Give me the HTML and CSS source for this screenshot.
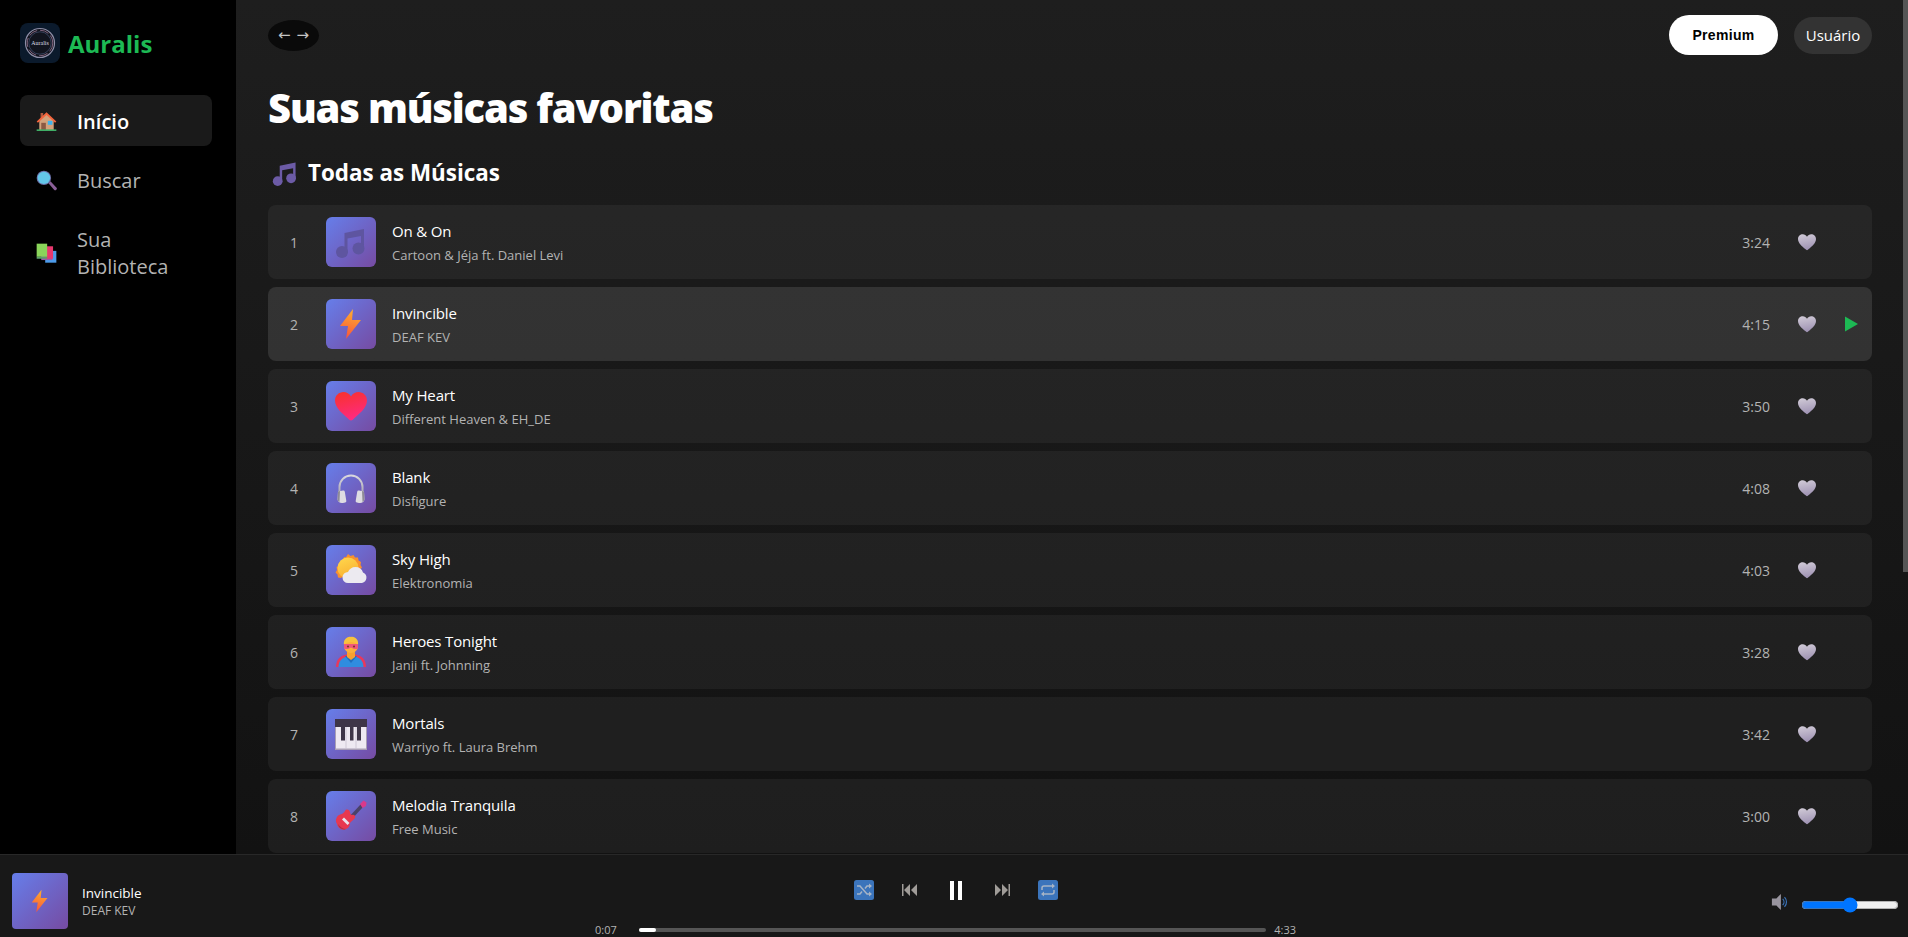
FILE: index.html
```html
<!DOCTYPE html>
<html lang="pt-BR">

<head>
  <meta charset="utf-8">
  <title>Auralis</title>
  <link rel="stylesheet" href="styles.css">
</head>

<body>
  <!-- emoji style icons, reused with <use> -->
  <svg class="icon-defs" width="0" height="0" aria-hidden="true">
    <defs>
      <linearGradient id="g-bolt" x1="0.6" y1="0" x2="0.4" y2="1">
        <stop offset="0" stop-color="#ffb02e" />
        <stop offset="1" stop-color="#f8543c" />
      </linearGradient>
      <linearGradient id="g-heart" x1="0.3" y1="0" x2="0.6" y2="1">
        <stop offset="0" stop-color="#f8312f" />
        <stop offset="1" stop-color="#ff2a85" />
      </linearGradient>
      <linearGradient id="g-grey-heart" x1="0" y1="0" x2="0.2" y2="1">
        <stop offset="0" stop-color="#d2ccd8" />
        <stop offset="1" stop-color="#a094b4" />
      </linearGradient>
      <linearGradient id="g-sun" x1="0" y1="0" x2="0.4" y2="1">
        <stop offset="0" stop-color="#ffd84d" />
        <stop offset="1" stop-color="#f9b233" />
      </linearGradient>
      <linearGradient id="g-phones" x1="0" y1="0" x2="0" y2="1">
        <stop offset="0" stop-color="#dcdae0" />
        <stop offset="1" stop-color="#a9a6b2" />
      </linearGradient>
      <linearGradient id="g-notes" x1="0.7" y1="0" x2="0.3" y2="1">
        <stop offset="0" stop-color="#6f5fae" />
        <stop offset="1" stop-color="#6a5ba6" />
      </linearGradient>

      <symbol id="i-house" viewBox="0 0 32 32">
        <path d="M7 3h4v5l-4 4z" fill="#b4593f" />
        <path d="M5 14 16 4l11 10v15H5z" fill="#d3a27c" />
        <path d="M16 2 31 16l-2 2L16 6 3 18l-2-2z" fill="#f4643c" />
        <path d="M8 18h7v11H8z" fill="#8c5a44" />
        <path d="M18 15h7v6h-7z" fill="#3fb3ec" />
        <path d="M1 28h30v2.500H1z" fill="#3fae66" />
      </symbol>
      <symbol id="i-search" viewBox="0 0 32 32">
        <path d="M19 20l3-3 9 9.500a2 2 0 0 1-3.500 3.500z" fill="#8a5f98" />
        <circle cx="12" cy="12" r="11" fill="#6c6fa8" />
        <circle cx="12" cy="12" r="9.500" fill="#63c7ea" />
      </symbol>
      <symbol id="i-books" viewBox="0 0 32 32">
        <path d="M14 12h17v18H14z" fill="#4c9bea" />
        <path d="M8 6h17v20H8z" fill="#9a5aa8" />
        <path d="M14 5h12v19H14z" fill="#e8386e" />
        <path d="M1 1h16v20H1z" fill="#8ad55a" />
        <path d="M1 21h16v3H1z" fill="#5c9f6a" />
      </symbol>
      <symbol id="i-notes" viewBox="0 0 32 32">
        <path d="M9.500 7 29 3v20h-3V10L12.500 12.500V27h-3z" fill="currentColor" />
        <circle cx="7" cy="26" r="6" fill="currentColor" />
        <circle cx="23.500" cy="22.500" r="6" fill="currentColor" />
      </symbol>
      <symbol id="i-bolt" viewBox="0 0 32 32">
        <path d="M18 1 5 18h8l-2 13 15-19h-9z" fill="url(#g-bolt)" />
      </symbol>
      <symbol id="i-heart" viewBox="0 0 32 32">
        <path d="M16 30.500c-1 0-2-1-3-2C8 24 0 18 0 10.500 0 5.500 4 2 8.500 2c3 0 6 1.500 7.500 4.500C17.500 3.500 20.500 2 23.500 2 28 2 32 5.500 32 10.500 32 18 24 24 19 28.500c-1 1-2 2-3 2z" fill="url(#g-heart)" />
      </symbol>
      <symbol id="i-grey-heart" viewBox="0 0 32 32">
        <path d="M16 30.500c-1 0-2-1-3-2C8 24 0 18 0 10.500 0 5.500 4 2 8.500 2c3 0 6 1.500 7.500 4.500C17.500 3.500 20.500 2 23.500 2 28 2 32 5.500 32 10.500 32 18 24 24 19 28.500c-1 1-2 2-3 2z" fill="url(#g-grey-heart)" />
      </symbol>
      <symbol id="i-phones" viewBox="0 0 32 32">
        <path d="M3.500 22V15a12.500 12.500 0 0 1 25 0v7h-2v-7a10.500 10.500 0 0 0-21 0v7z" fill="url(#g-phones)" />
        <path d="M3 19.500 8 18.500a1.500 1.500 0 0 1 1.800 1.200l1.500 9a1.500 1.500 0 0 1-1.200 1.800L8 31c-3 .5-5-1-5.500-3.500z" fill="#dedce2" />
        <path d="M29 19.500 24 18.500a1.500 1.500 0 0 0-1.800 1.200l-1.500 9a1.500 1.500 0 0 0 1.200 1.800L24 31c3 .5 5-1 5.500-3.500z" fill="#dedce2" />
        <path d="M2.500 27.500 3 19.500 5 19l-.5 11c-1-.5-1.700-1.500-2-2.500zM29.500 27.500 29 19.500 27 19l.5 11c1-.5 1.700-1.500 2-2.500z" fill="#8e8b96" />
      </symbol>
      <symbol id="i-sun" viewBox="0 0 32 32">
        <path d="M13 0l2.500 2 3-1 1.500 2.500h3l.5 3 2.500 1.500-.5 3 1.500 2.500-2 2-.5 3-3 .5-1.500 2.500-3-.5-2.500 2-2.500-2-3 .5L6 24l-3-.5-.5-3-2-2L2 16l-.5-3L4 11.500l.5-3h3L9 3l2 .2z" fill="#f8912e" />
        <circle cx="13" cy="14" r="10.500" fill="url(#g-sun)" />
        <path d="M13 29a5.500 5.500 0 0 1 0-11c1-3 4-5 7.500-5a8 8 0 0 1 7.500 5.500 5.500 5.500 0 0 1-1 10.500z" fill="#eceaf0" />
      </symbol>
      <symbol id="i-hero" viewBox="0 0 32 32">
        <path d="M1 31c0-8 5-13 15-13s15 5 15 13z" fill="#e8385c" />
        <path d="M3.500 31c0-7 5-11 12.500-11s12.500 4 12.500 11z" fill="#2f8de0" />
        <path d="M10 20h12l-6 7z" fill="#1f6fc0" />
        <path d="M12 15h8v6l-4 3-4-3z" fill="#f9a12e" />
        <circle cx="16" cy="10" r="7" fill="#fbb03b" />
        <path d="M9 9c-1-5 3-9 7-8 4-1 8 3 7 8-2-2-4-3-7-3s-5 1-7 3z" fill="#f7c23e" />
        <path d="M9 8h14v3.500a1.500 1.500 0 0 1-1.500 1.500H19l-3-1.500-3 1.500h-2.500A1.500 1.500 0 0 1 9 11.500z" fill="#f0567a" />
        <circle cx="13" cy="10.500" r="1.100" fill="#7a3a2a" />
        <circle cx="19" cy="10.500" r="1.100" fill="#7a3a2a" />
      </symbol>
      <symbol id="i-piano" viewBox="0 0 32 32">
        <path d="M0 1h32v31H0z" fill="#a99fb5" />
        <path d="M1 9h30v21.500H1z" fill="#eee9f2" />
        <path d="M0 1h32v8H0z" fill="#3e3548" />
        <path d="M11 9v21.500M21 9v21.500" stroke="#c8c0d0" stroke-width="0.800" />
        <path d="M6 9h4v13.500H6zM15 9h3.500v13.500H15zM22 9h4v13.500h-4z" fill="#3e3548" />
      </symbol>
      <symbol id="i-guitar" viewBox="0 0 32 32">
        <path d="M13 18 26 4l2.500 2.500-13 14z" fill="#4a4268" />
        <path d="M25 4l3.500-3.500 3 2-.5 3.500-3.500 2z" fill="#d9398b" />
        <path d="M15 12c-1-3-4-3-5-1-1 2-3 3-6 4-3 2-4 6-2 9 1 4 5 7 9 5 3-1 4-4 4-6 1-2 4-3 5-5 1-2-1-4-3-3-1 0-2-1-2-3z" fill="#e8384f" />
        <path d="M9 17.500l5.500 5.500-2 2-5.500-5.500z" fill="#e9e4ec" />
        <path d="M3 24c2 3 5 5 8 5-2 1-5 0-7-2z" fill="#a8324a" />
      </symbol>
    </defs>
  </svg>

  <div class="app">
    <aside class="sidebar">
      <div class="brand">
        <svg class="brand-logo" viewBox="0 0 40 40" aria-hidden="true">
          <rect width="40" height="40" rx="8" fill="#0b1a2c" />
          <circle cx="20" cy="20" r="14.500" fill="#11141e" stroke="#8d8da6" stroke-width="1.200" />
          <circle cx="20" cy="20" r="12.800" fill="none" stroke="#a07a98" stroke-width="0.800" stroke-dasharray="9 3" />
          <circle cx="20" cy="20" r="11.200" fill="none" stroke="#4a5a80" stroke-width="0.600" />
          <text x="20" y="21.500" text-anchor="middle" class="brand-logo-text">Auralis</text>
        </svg>
        <span class="brand-name">Auralis</span>
      </div>

      <nav class="nav">
        <a class="nav-item is-active" href="#"><svg class="nav-icon"><use href="#i-house" /></svg><span>Início</span></a>
        <a class="nav-item" href="#"><svg class="nav-icon"><use href="#i-search" /></svg><span>Buscar</span></a>
        <a class="nav-item" href="#"><svg class="nav-icon"><use href="#i-books" /></svg><span class="nav-label-wrap">Sua Biblioteca</span></a>
      </nav>
    </aside>

    <main class="main">
      <header class="topbar">
        <div class="history"><span>←</span><span>→</span></div>
        <div class="topbar-actions">
          <button class="btn-premium">Premium</button>
          <button class="btn-user">Usuário</button>
        </div>
      </header>

      <h1 class="page-title">Suas músicas favoritas</h1>

      <h2 class="section-title"><svg class="section-icon"><use href="#i-notes" /></svg>Todas as Músicas</h2>

      <div class="tracks">
        <div class="track">
          <span class="track-num">1</span>
          <div class="cover"><svg class="cover-icon cover-notes"><use href="#i-notes" /></svg></div>
          <div class="track-info"><div class="track-title">On &amp; On</div><div class="track-artist">Cartoon &amp; Jéja ft. Daniel Levi</div></div>
          <span class="track-time">3:24</span>
          <svg class="track-heart"><use href="#i-grey-heart" /></svg>
          <svg class="track-play" viewBox="0 0 14 16"><path d="M0 0l14 8-14 8z" /></svg>
        </div>
        <div class="track is-current">
          <span class="track-num">2</span>
          <div class="cover"><svg class="cover-icon"><use href="#i-bolt" /></svg></div>
          <div class="track-info"><div class="track-title">Invincible</div><div class="track-artist">DEAF KEV</div></div>
          <span class="track-time">4:15</span>
          <svg class="track-heart"><use href="#i-grey-heart" /></svg>
          <svg class="track-play" viewBox="0 0 14 16"><path d="M0 0l14 8-14 8z" /></svg>
        </div>
        <div class="track">
          <span class="track-num">3</span>
          <div class="cover"><svg class="cover-icon"><use href="#i-heart" /></svg></div>
          <div class="track-info"><div class="track-title">My Heart</div><div class="track-artist">Different Heaven &amp; EH_DE</div></div>
          <span class="track-time">3:50</span>
          <svg class="track-heart"><use href="#i-grey-heart" /></svg>
          <svg class="track-play" viewBox="0 0 14 16"><path d="M0 0l14 8-14 8z" /></svg>
        </div>
        <div class="track">
          <span class="track-num">4</span>
          <div class="cover"><svg class="cover-icon"><use href="#i-phones" /></svg></div>
          <div class="track-info"><div class="track-title">Blank</div><div class="track-artist">Disfigure</div></div>
          <span class="track-time">4:08</span>
          <svg class="track-heart"><use href="#i-grey-heart" /></svg>
          <svg class="track-play" viewBox="0 0 14 16"><path d="M0 0l14 8-14 8z" /></svg>
        </div>
        <div class="track">
          <span class="track-num">5</span>
          <div class="cover"><svg class="cover-icon"><use href="#i-sun" /></svg></div>
          <div class="track-info"><div class="track-title">Sky High</div><div class="track-artist">Elektronomia</div></div>
          <span class="track-time">4:03</span>
          <svg class="track-heart"><use href="#i-grey-heart" /></svg>
          <svg class="track-play" viewBox="0 0 14 16"><path d="M0 0l14 8-14 8z" /></svg>
        </div>
        <div class="track">
          <span class="track-num">6</span>
          <div class="cover"><svg class="cover-icon"><use href="#i-hero" /></svg></div>
          <div class="track-info"><div class="track-title">Heroes Tonight</div><div class="track-artist">Janji ft. Johnning</div></div>
          <span class="track-time">3:28</span>
          <svg class="track-heart"><use href="#i-grey-heart" /></svg>
          <svg class="track-play" viewBox="0 0 14 16"><path d="M0 0l14 8-14 8z" /></svg>
        </div>
        <div class="track">
          <span class="track-num">7</span>
          <div class="cover"><svg class="cover-icon"><use href="#i-piano" /></svg></div>
          <div class="track-info"><div class="track-title">Mortals</div><div class="track-artist">Warriyo ft. Laura Brehm</div></div>
          <span class="track-time">3:42</span>
          <svg class="track-heart"><use href="#i-grey-heart" /></svg>
          <svg class="track-play" viewBox="0 0 14 16"><path d="M0 0l14 8-14 8z" /></svg>
        </div>
        <div class="track">
          <span class="track-num">8</span>
          <div class="cover"><svg class="cover-icon"><use href="#i-guitar" /></svg></div>
          <div class="track-info"><div class="track-title">Melodia Tranquila</div><div class="track-artist">Free Music</div></div>
          <span class="track-time">3:00</span>
          <svg class="track-heart"><use href="#i-grey-heart" /></svg>
          <svg class="track-play" viewBox="0 0 14 16"><path d="M0 0l14 8-14 8z" /></svg>
        </div>
      </div>

      <div class="scroll-thumb"></div>
    </main>

    <footer class="player">
      <div class="now-playing">
        <div class="cover cover-large"><svg class="cover-icon"><use href="#i-bolt" /></svg></div>
        <div>
          <div class="now-title">Invincible</div>
          <div class="now-artist">DEAF KEV</div>
        </div>
      </div>

      <div class="transport">
        <div class="controls">
          <svg class="ctl-box" viewBox="0 0 20 20">
            <rect width="20" height="20" rx="2.500" fill="#3b74bb" />
            <path d="M3 6h3l7 8h2M3 14h3l2-2.500M11 8.500 13 6h2" fill="none" stroke="#a7b4c6" stroke-width="1.500" />
            <path d="M15 3.500 18 6l-3 2.500zM15 11.500l3 2.500-3 2.500z" fill="#a7b4c6" />
          </svg>
          <svg class="ctl-skip" viewBox="0 0 15 14"><path d="M0 1h1.500v12H0zM8 1v12L2 7zM15 1v12L9 7z" /></svg>
          <div class="ctl-pause"><span></span><span></span></div>
          <svg class="ctl-skip" viewBox="0 0 15 14"><path d="M0 1v12l6-6zM7 1v12l6-6zM13.500 1H15v12h-1.500z" /></svg>
          <svg class="ctl-box" viewBox="0 0 20 20">
            <rect width="20" height="20" rx="2.500" fill="#3b74bb" />
            <path d="M4 10V8a2 2 0 0 1 2-2h9M16 10v2a2 2 0 0 1-2 2H5" fill="none" stroke="#a7b4c6" stroke-width="1.500" />
            <path d="M14 3.500 17 6l-3 2.500zM6 11.500 3 14l3 2.500z" fill="#a7b4c6" />
          </svg>
        </div>
        <div class="progress">
          <span class="progress-time">0:07</span>
          <div class="progress-bar"><div class="progress-fill" style="width: 2.800%"></div></div>
          <span class="progress-time">4:33</span>
        </div>
      </div>

      <div class="volume">
        <svg class="volume-icon" viewBox="0 0 18 20">
          <path d="M0 6h5l5-5v18l-5-5H0z" fill="#98949e" />
          <path d="M12 6.500a5 5 0 0 1 0 7M14 4.500a8 8 0 0 1 0 11" fill="none" stroke="#3b74bb" stroke-width="1.300" />
        </svg>
        <input class="volume-range" type="range" min="0" max="100" value="50">
      </div>
    </footer>
  </div>
</body>

</html>
```

FILE: styles.css
```css
* {
  box-sizing: border-box;
}

html,
body {
  height: 100%;
  margin: 0;
  overflow: hidden;
}

body {
  background: #000;
  color: white;
  font-family: "Open Sans", "Noto Sans", sans-serif;
}

.icon-defs {
  position: absolute;
}

.app {
  display: grid;
  grid-template-columns: 236px 1fr;
  grid-template-rows: 854px 83px;
  height: 100vh;
}

/* sidebar */
.sidebar {
  padding: 23px 24px 23px 20px;
  background: #000;
}

.brand {
  display: flex;
  align-items: center;
  gap: 8px;
  margin-bottom: 32px;
}

.brand-logo {
  width: 40px;
  height: 40px;
}

.brand-logo-text {
  font-family: "Liberation Serif", serif;
  font-size: 6px;
  fill: #d8d8e0;
}

.brand-name {
  color: #1db954;
  font-size: 24px;
  font-weight: 700;
}

.nav {
  display: flex;
  flex-direction: column;
  gap: 8px;
}

.nav-item {
  display: flex;
  align-items: center;
  gap: 20px;
  padding: 13px 16px 11px;
  border-radius: 8px;
  color: #b3b3b3;
  font-size: 20px;
  font-weight: 500;
  line-height: 27px;
  text-decoration: none;
}

.nav-item.is-active {
  background: #1a1a1a;
  color: white;
  font-weight: 600;
}

.nav-icon {
  flex: none;
  width: 21px;
  height: 21px;
}

.nav-label-wrap {
  width: 100px;
}

/* main column */
.main {
  position: relative;
  padding: 0 36px 0 32px;
  overflow: hidden;
  background: linear-gradient(180deg, #1e1e1e, #121212);
}

.scroll-thumb {
  position: absolute;
  top: 0;
  right: 0;
  width: 5px;
  height: 572px;
  background: #555;
}

.topbar {
  display: flex;
  align-items: center;
  justify-content: space-between;
  height: 70px;
}

.history {
  display: flex;
  align-items: center;
  justify-content: center;
  gap: 6px;
  width: 51px;
  height: 31px;
  border-radius: 50%;
  background: #0a0a0a;
  color: #c4c4c4;
  font-family: "DejaVu Sans", sans-serif;
  font-size: 15px;
}

.topbar-actions {
  display: flex;
  align-items: center;
  gap: 16px;
}

.btn-premium {
  width: 109px;
  height: 40px;
  border: 0;
  border-radius: 20px;
  background: white;
  color: black;
  font-family: "Liberation Sans", sans-serif;
  font-size: 14px;
  font-weight: 700;
  letter-spacing: 0.3px;
}

.btn-user {
  width: 78px;
  height: 37px;
  border: 0;
  border-radius: 19px;
  background: #333;
  color: white;
  font-family: inherit;
  font-size: 15px;
}

.page-title {
  margin: 10px 0 0;
  font-size: 40px;
  font-weight: 800;
  line-height: 56px;
  letter-spacing: -1.200px;
}

.section-title {
  display: flex;
  align-items: center;
  gap: 10px;
  margin: 22px 0 17px;
  padding-left: 4px;
  font-size: 22.400px;
  font-weight: 700;
  line-height: 30px;
}

.section-icon {
  width: 26px;
  height: 26px;
  color: #6c5ba6;
}

.tracks {
  display: flex;
  flex-direction: column;
  gap: 8px;
}

.track {
  display: flex;
  align-items: center;
  height: 74px;
  padding: 0 14px 0 16px;
  border-radius: 8px;
  background: rgba(255, 255, 255, 0.05);
}

.track.is-current {
  background: rgba(255, 255, 255, 0.11);
}

.track-num {
  width: 20px;
  margin-right: 22px;
  color: #b3b3b3;
  font-size: 14px;
  text-align: center;
}

.cover {
  display: flex;
  flex: none;
  align-items: center;
  justify-content: center;
  width: 50px;
  height: 50px;
  border-radius: 6px;
  background: linear-gradient(135deg, #667eea, #764ba2);
}

.cover-icon {
  width: 32px;
  height: 32px;
}

.cover-notes {
  color: #5e55a0;
}

.track-info {
  flex: 1;
  margin-left: 16px;
}

.track-title {
  font-size: 15px;
  line-height: 22px;
  letter-spacing: -0.150px;
}

.track-artist {
  margin-top: 3px;
  color: #b3b3b3;
  font-size: 13px;
  line-height: 20px;
}

.track-time {
  color: #b3b3b3;
  font-size: 14px;
}

.track-heart {
  width: 18px;
  height: 18px;
  margin: 0 29px 0 28px;
}

.track-play {
  width: 13px;
  height: 16px;
  fill: #1db954;
  visibility: hidden;
}

.track.is-current .track-play {
  visibility: visible;
}

/* bottom player */
.player {
  display: grid;
  grid-column: 1 / 3;
  grid-template-columns: 595px 701px 1fr;
  height: 83px;
  overflow: hidden;
  border-top: 1px solid #282828;
  background: #181818;
}

.now-playing {
  display: flex;
  align-items: center;
  gap: 14px;
  padding: 8px 0 0 12px;
}

.cover-large {
  width: 56px;
  height: 56px;
  border-radius: 4px;
}

.cover-large .cover-icon {
  width: 24px;
  height: 24px;
}

.now-title {
  font-size: 13.500px;
  line-height: 20px;
}

.now-artist {
  color: #b3b3b3;
  font-size: 12px;
  line-height: 16px;
}

.transport {
  padding-top: 24px;
}

.controls {
  display: flex;
  align-items: center;
  justify-content: center;
  gap: 28px;
  height: 22px;
  padding-left: 21px;
}

.ctl-box {
  width: 20px;
  height: 20px;
}

.ctl-skip {
  width: 15px;
  height: 14px;
  fill: #a09c98;
}

.ctl-pause {
  display: flex;
  gap: 4px;
  width: 12px;
  height: 19px;
  margin: 0 5px;
}

.ctl-pause span {
  width: 4px;
  background: white;
}

.progress {
  display: flex;
  align-items: center;
  margin-top: 21px;
}

.progress-time {
  color: #b3b3b3;
  font-size: 11px;
  line-height: 16px;
}

.progress-bar {
  flex: 1;
  height: 4px;
  margin: 0 8px 0 22px;
  border-radius: 2px;
  background: #555;
}

.progress-fill {
  height: 100%;
  border-radius: 2px;
  background: white;
}

.volume {
  display: flex;
  align-items: center;
  justify-content: flex-end;
  gap: 12px;
  padding: 16px 9px 0 0;
}

.volume-icon {
  width: 18px;
  height: 18px;
  margin-top: -6px;
}

.volume-range {
  width: 98px;
  margin: 0;
}
```
